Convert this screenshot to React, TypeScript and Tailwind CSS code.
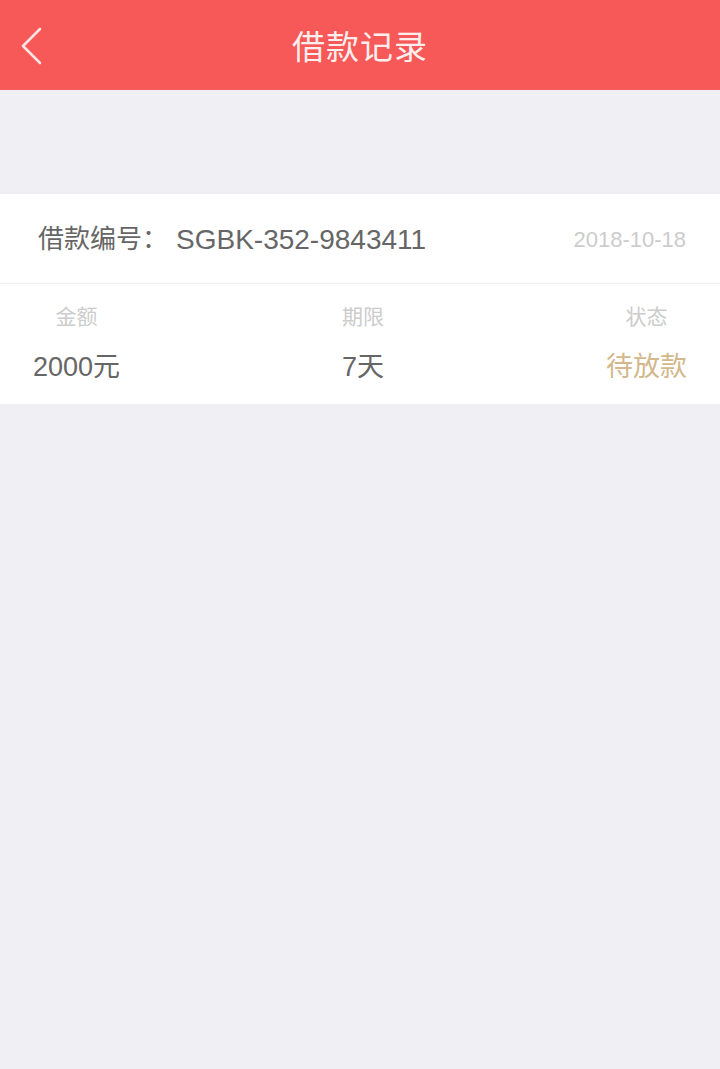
export default function App() {
  const font = { fontFamily: '"Liberation Sans", "Noto Sans CJK SC", "Noto Sans", sans-serif' };
  return (
    <div className="min-h-[1069px] w-[720px] bg-[#efeff4]" style={font}>
      <header className="relative flex h-[90px] items-center justify-center bg-[#f75858] pt-[4px]">
        <button className="absolute left-[18px] top-[26px] p-0">
          <svg width="26" height="40" viewBox="0 0 26 40" fill="none">
            <path d="M22 3 L5 20 L22 37" stroke="#fbe3e3" strokeWidth="2.6" strokeLinecap="round" strokeLinejoin="round" />
          </svg>
        </button>
        <h1 className="text-[33px] leading-none text-[#fdeeee] tracking-[1px]">借款记录</h1>
      </header>

      <div className="mt-[104px] bg-white">
        <div className="flex h-[90px] items-center justify-between pl-[38px] pr-[34px] pt-[2px] border-b border-[#f1f1f1]">
          <span className="flex items-center text-[26px] text-[#666666]">
            借款编号：<span className="ml-[8px] text-[28px]">SGBK-352-9843411</span>
          </span>
          <span className="text-[22px] text-[#cccccc]">2018-10-18</span>
        </div>
        <div className="flex justify-between px-[33px] pt-[20px] pb-[20px]">
          <div className="flex flex-col items-center gap-[20px]">
            <span className="text-[21px] leading-[26px] text-[#cccccc]">金额</span>
            <span className="text-[27px] leading-[34px] text-[#666666]">2000元</span>
          </div>
          <div className="flex flex-col items-center gap-[20px]">
            <span className="text-[21px] leading-[26px] text-[#cccccc]">期限</span>
            <span className="text-[27px] leading-[34px] text-[#666666]">7天</span>
          </div>
          <div className="flex flex-col items-center gap-[20px]">
            <span className="text-[21px] leading-[26px] text-[#cccccc]">状态</span>
            <span className="text-[27px] leading-[34px] text-[#d2b88c]">待放款</span>
          </div>
        </div>
      </div>
    </div>
  );
}
